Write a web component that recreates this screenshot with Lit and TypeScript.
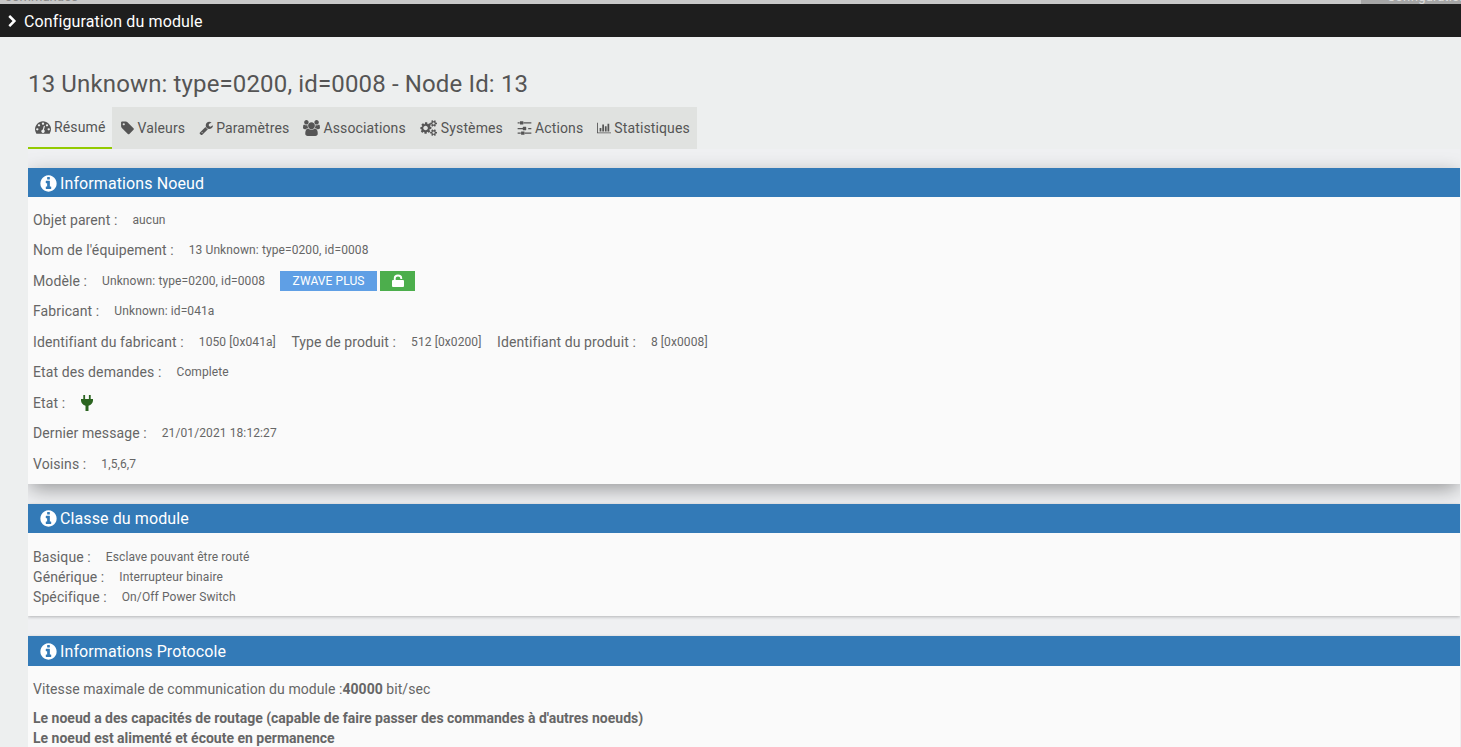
import { LitElement, css, html, svg } from "lit";
import { customElement } from "lit/decorators.js";

// font-awesome style glyphs, drawn on a 1792 grid
const icon = (d: unknown, w = 1792, px?: number) =>
  html`<svg class="ic" viewBox="0 0 ${w} 1792" fill="currentColor" style=${px ? `width:${px}px;height:16px` : ""}>${d}</svg>`;

const gauge = svg`<path d="M384 1152q0-53-37.5-90.5T256 1024t-90.5 37.5T128 1152t37.5 90.5T256 1280t90.5-37.5T384 1152zm192-448q0-53-37.5-90.5T448 576t-90.5 37.5T320 704t37.5 90.5T448 832t90.5-37.5T576 704zm428 506l101-382q6-26-7.5-48.5T1059 750t-48 6.500-30 39l-101 382q-60 5-107 43.500t-63 98.500q-20 77 20 146t117 89 146-20 89-117q16-60-6-117t-72-91zm660-58q0-53-37.500-90.500T1536 1024t-90.500 37.500-37.500 90.500 37.500 90.500 90.500 37.500 90.500-37.500 37.500-90.500zM1024 512q0-53-37.500-90.500T896 384t-90.500 37.500T768 512t37.500 90.500T896 640t90.500-37.500T1024 512zm448 192q0-53-37.500-90.500T1344 576t-90.500 37.500T1216 704t37.500 90.500T1344 832t90.500-37.500T1472 704zm320 448q0 261-141 483-19 29-54 29H195q-35 0-54-29Q0 1414 0 1152q0-182 71-348t191-286 286-191 348-71 348 71 286 191 191 286 71 348z"/>`;
const tag = svg`<path d="M576 448q0-53-37.500-90.500T448 320t-90.500 37.500T320 448t37.500 90.500T448 576t90.500-37.500T576 448zm1067 576q0 53-37 90l-491 492q-39 37-91 37-53 0-90-37L218 890q-38-37-64.500-101T127 672V256q0-52 38-90t90-38h416q53 0 117 26.500T889 219l715 714q39 39 39 91z"/>`;
const wrench = svg`<path d="M448 1472q0-26-19-45t-45-19-45 19-19 45 19 45 45 19 45-19 19-45zm644-420l-682 682q-37 37-90 37-52 0-91-37l-106-108q-38-36-38-90 0-53 38-91l680-680q39 98 114.500 173.500T1091 1052zm634-435q0 39-23 106-47 134-164.500 217.500T1280 1024q-185 0-316.500-131.500T832 576t131.500-316.500T1280 128q58 0 121.500 16.500T1509 191q16 11 16 28t-16 28l-293 169v224l193 107q5-3 79-48.500t135.500-81T1694 582q15 0 23.500 10t8.500 25z"/>`;
const users = svg`<path d="M593 896q-162 5-265 128H194q-82 0-138-40.500T0 865q0-353 124-353 6 0 43.500 21t97.500 42.500T384 597q67 0 133-23-5 37-5 66 0 139 81 256zm1071 637q0 120-73 189.500t-194 69.500H523q-121 0-194-69.500T256 1533q0-53 3.500-103.500t14-109T300 1212t43-97.500 62-81 85.500-53.500T602 960q10 0 43 21.500t73 48 107 48 135 21.500 135-21.500 107-48 73-48 43-21.500q61 0 111.500 20t85.500 53.500 62 81 43 97.500 26.500 108.500 14 109 3.500 103.500zM640 256q0 106-75 181t-181 75-181-75-75-181 75-181 181-75 181 75 75 181zm704 384q0 159-112.500 271.500T960 1024 688.500 911.500 576 640t112.500-271.500T960 256t271.500 112.500T1344 640zm576 225q0 78-56 118.500t-138 40.500h-134q-103-123-265-128 81-117 81-256 0-29-5-66 66 23 133 23 59 0 119-21.500t97.500-42.500 43.500-21q124 0 124 353zm-128-609q0 106-75 181t-181 75-181-75-75-181 75-181 181-75 181 75 75 181z"/>`;
const cogs = svg`<path d="M832 896q0-106-75-181t-181-75-181 75-75 181 75 181 181 75 181-75 75-181zm768 512q0-52-38-90t-90-38-90 38-38 90q0 53 37.500 90.500T1472 1536t90.500-37.500T1600 1408zm0-1024q0-52-38-90t-90-38-90 38-38 90q0 53 37.500 90.500T1472 512t90.500-37.500T1600 384zm-384 421v185q0 10-7 19.500t-16 10.500l-155 24q-11 35-32 76 34 48 90 115 7 11 7 20 0 12-7 19-23 30-82.500 89.500T935 1423q-11 0-21-7l-115-90q-37 19-77 31-11 108-23 155-7 24-30 24H483q-11 0-20-7.500T453 1510l-23-153q-34-10-75-31l-118 89q-7 7-20 7-11 0-21-8-144-133-144-160 0-9 7-19 10-14 41-53t47-61q-23-44-35-82l-152-24q-10-1-17-9.500T0 987V802q0-10 7-19.500T23 772l155-24q11-35 32-76-34-48-90-115-7-11-7-20 0-12 7-20 22-30 82-89t79-59q11 0 21 7l115 90q34-18 77-32 11-108 23-154 7-24 30-24h186q11 0 20 7.500t10 17.500l23 153q34 10 75 31l118-89q8-7 20-7 11 0 21 8 144 133 144 160 0 8-7 19-12 16-42 54t-45 60q23 48 34 82l152 23q10 2 17 10.500t7 19.500zm640 533v140q0 16-149 31-12 27-30 52 51 113 51 138 0 4-4 7-122 71-124 71-8 0-46-47t-52-68q-20 2-30 2t-30-2q-14 21-52 68t-46 47q-2 0-124-71-4-3-4-7 0-25 51-138-18-25-30-52-149-15-149-31v-140q0-16 149-31 13-29 30-52-51-113-51-138 0-4 4-7 4-2 35-20t59-34 30-16q8 0 46 46.500t52 67.500q20-2 30-2t30 2q51-71 92-112l6-2q4 0 124 70 4 3 4 7 0 25-51 138 17 23 30 52 149 15 149 31zm0-1024v140q0 16-149 31-12 27-30 52 51 113 51 138 0 4-4 7-122 71-124 71-8 0-46-47t-52-68q-20 2-30 2t-30-2q-14 21-52 68t-46 47q-2 0-124-71-4-3-4-7 0-25 51-138-18-25-30-52-149-15-149-31V314q0-16 149-31 13-29 30-52-51-113-51-138 0-4 4-7 4-2 35-20t59-34 30-16q8 0 46 46.500t52 67.500q20-2 30-2t30 2q51-71 92-112l6-2q4 0 124 70 4 3 4 7 0 25-51 138 17 23 30 52 149 15 149 31z"/>`;
const sliders = svg`<path d="M352 1408v128H0v-128h352zm352-128q26 0 45 19t19 45v256q0 26-19 45t-45 19H448q-26 0-45-19t-19-45v-256q0-26 19-45t45-19h256zm160-384v128H0V896h864zM224 256v128H0V256h224zm1312 1152v128H800v-128h736zM576 128q26 0 45 19t19 45v256q0 26-19 45t-45 19H320q-26 0-45-19t-19-45V192q0-26 19-45t45-19h256zm320 640q26 0 45 19t19 45v256q0 26-19 45t-45 19H640q-26 0-45-19t-19-45V832q0-26 19-45t45-19h256zm640 128v128h-352V896h352zm0-640v128H672V256h864z"/>`;
const chart = svg`<path d="M640 896v512H384V896h256zm384-512v1024H768V384h256zm1024 1152v128H0V128h128v1408h1920zm-640-896v768h-256V640h256zm384-384v1152h-256V256h256z"/>`;
const info = svg`<path d="M1152 1376v-160q0-14-9-23t-23-9h-96V672q0-14-9-23t-23-9H672q-14 0-23 9t-9 23v160q0 14 9 23t23 9h96v320h-96q-14 0-23 9t-9 23v160q0 14 9 23t23 9h448q14 0 23-9t9-23zm-128-896V320q0-14-9-23t-23-9H800q-14 0-23 9t-9 23v160q0 14 9 23t23 9h192q14 0 23-9t9-23zm640 416q0 209-103 385.500T1281.500 1561 896 1664t-385.500-103T231 1281.500 128 896t103-385.500T510.500 231 896 128t385.500 103T1561 510.500 1664 896z"/>`;
const chevron = svg`<path d="M1363 877l-742 742q-19 19-45 19t-45-19l-166-166q-19-19-19-45t19-45l531-531-531-531q-19-19-19-45t19-45l166-166q19-19 45-19t45 19l742 742q19 19 19 45t-19 45z"/>`;

const tabs = [
  { label: "Résumé", d: gauge, w: 1792, px: 16, active: true },
  { label: "Valeurs", d: tag, w: 1664, px: 14 },
  { label: "Paramètres", d: wrench, w: 1728, px: 14 },
  { label: "Associations", d: users, w: 1920, px: 17 },
  { label: "Systèmes", d: cogs, w: 1920, px: 18 },
  { label: "Actions", d: sliders, w: 1536, px: 15 },
  { label: "Statistiques", d: chart, w: 2048, px: 14 },
];

@customElement("app-root")
export class AppRoot extends LitElement {
  static styles = css`
    :host {
      display: block;
      height: 747px;
      overflow: hidden;
      background: #edefef;
      font-family: Roboto, sans-serif;
      font-size: 14px;
      letter-spacing: .1px;
      color: #666;
    }
    .strip {
      height: 4px;
      background: #c8c8c8;
      overflow: hidden;
      display: flex;
      justify-content: space-between;
      font-size: 13px;
      line-height: 14px;
    }
    .strip span { margin-top: -10px; height: 14px; }
    .strip .left { margin-left: 5px; color: #8a8a8a; }
    .strip .right { width: 100px; padding-left: 26px; box-sizing: border-box; background: #a6a6a6; color: #dedede; height: 24px; }
    .bar {
      height: 33px;
      background: #1e1e1e;
      color: #fff;
      font-size: 16px;
      letter-spacing: .13px;
      display: flex;
      align-items: center;
      gap: 5px;
      padding: 1px 0 0 6px;
      box-sizing: border-box;
    }
    .bar .ic { width: 13px; height: 13px; }
    .page { padding: 0 1px 0 28px; }
    h1 {
      margin: 0;
      padding-top: 33px;
      height: 37px;
      font-size: 24px;
      line-height: 28px;
      font-weight: 400;
      letter-spacing: .14px;
      color: #555;
    }
    .tabs {
      display: inline-flex;
      background: #e0e2e0;
      height: 42px;
      vertical-align: top;
    }
    .tab {
      display: flex;
      align-items: center;
      gap: 3px;
      padding: 0 7px;
      color: #555;
      letter-spacing: .13px;
    }
    .tab.active {
      background: #edefef;
      border-bottom: 2px solid #93ca02;
      margin-right: 1px;
      box-sizing: border-box;
    }
    .ic { flex: none; }
    .tab-row { height: 42px; }
    .content {
      background: #eff0f2;
      overflow: hidden;
      padding-top: 19px;
    }
    .panel { background: #fafafa; margin-bottom: 20px; }
    .panel.big { box-shadow: 0 6px 20px -2px rgba(0,0,0,.4); }
    .panel.small { box-shadow: 0 1px 3px rgba(0,0,0,.25); }
    .head {
      height: 29px;
      background: #337ab7;
      color: #fff;
      font-size: 16px;
      display: flex;
      align-items: center;
      gap: 2px;
      padding: 1px 0 0 11px;
      box-sizing: border-box;
    }
    .head .ic { width: 19px; height: 19px; }
    .head.tall { height: 30px; padding-top: 2px; }
    .body { padding: 7.7px 5px 4.8px; }
    .row { height: 30.5px; display: flex; align-items: center; white-space: nowrap; }
    .val { font-size: 12px; margin-left: 15px; }
    .lbl2 { margin-left: 15.5px; }
    .badge {
      height: 20px;
      display: flex;
      align-items: center;
      justify-content: center;
      color: #fff;
      font-size: 12px;
      margin-left: 15px;
    }
    .zw { width: 97px; background: #5f9fe5; }
    .lock { width: 35px; background: #4cae4c; margin-left: 3px; }
    .lock svg { width: 12px; height: 13px; margin-top: -1px; }
    .plug { color: #2b6420; margin-left: 16px; display: flex; }
    .plug svg { width: 12px; height: 16px; }
    .cls { padding: 14px 5px 9px; }
    .cls .row { height: 20px; }
    .proto { padding: 13px 5px 0; letter-spacing: .07px; }
    .proto p { margin: 0; line-height: 20px; }
    .proto .speed { margin-bottom: 9px; }
    b { font-weight: 700; letter-spacing: 0; }
  `;

  row(label: string, value: string) {
    return html`<div class="row"><span>${label}</span><span class="val">${value}</span></div>`;
  }

  panelHead(title: string, tall = false) {
    return html`<div class="head ${tall ? "tall" : ""}">${icon(info)}<span>${title}</span></div>`;
  }

  render() {
    return html`
      <div class="strip"><span class="left">commandes</span><span class="right">Configuration</span></div>
      <div class="bar">${icon(chevron)}<span>Configuration du module</span></div>
      <div class="page">
        <h1>13 Unknown: type=0200, id=0008 - Node Id: 13</h1>
        <div class="tab-row">
          <div class="tabs">
            ${tabs.map(
              (t) => html`<div class="tab ${t.active ? "active" : ""}">${icon(t.d, t.w, t.px)}<span>${t.label}</span></div>`
            )}
          </div>
        </div>
        <div class="content">
          <div class="panel big">
            ${this.panelHead("Informations Noeud")}
            <div class="body">
              ${this.row("Objet parent :", "aucun")}
              ${this.row("Nom de l'équipement :", "13 Unknown: type=0200, id=0008")}
              <div class="row">
                <span>Modèle :</span>
                <span class="val">Unknown: type=0200, id=0008</span>
                <span class="badge zw">ZWAVE PLUS</span>
                <span class="badge lock">
                  <svg viewBox="0 0 12 13" fill="currentColor">
                    <path d="M1.800 6.500V4.200a4.200 3.700 0 0 1 8.400 0v.8H8.300V4.300a2.300 1.900 0 0 0-4.600 0v2.200z"/>
                    <rect y="6" width="12" height="7" rx="1"/>
                  </svg>
                </span>
              </div>
              ${this.row("Fabricant :", "Unknown: id=041a")}
              <div class="row">
                <span>Identifiant du fabricant :</span><span class="val">1050 [0x041a]</span>
                <span class="lbl2">Type de produit :</span><span class="val">512 [0x0200]</span>
                <span class="lbl2">Identifiant du produit :</span><span class="val">8 [0x0008]</span>
              </div>
              ${this.row("Etat des demandes :", "Complete")}
              <div class="row">
                <span>Etat :</span>
                <span class="plug">
                  <svg viewBox="0 0 12 16" fill="currentColor">
                    <path d="M2.300 0h1.800v4H2.300zM7.900 0h1.800v4H7.900zM0 4h12v1.500c0 2.500-2 4.500-4.500 5.200V16h-3v-5.300C2 10 0 8 0 5.500z"/>
                  </svg>
                </span>
              </div>
              ${this.row("Dernier message :", "21/01/2021 18:12:27")}
              ${this.row("Voisins :", "1,5,6,7")}
            </div>
          </div>
          <div class="panel small">
            ${this.panelHead("Classe du module")}
            <div class="cls">
              ${this.row("Basique :", "Esclave pouvant être routé")}
              ${this.row("Générique :", "Interrupteur binaire")}
              ${this.row("Spécifique :", "On/Off Power Switch")}
            </div>
          </div>
          <div class="panel small">
            ${this.panelHead("Informations Protocole", true)}
            <div class="proto">
              <p class="speed">Vitesse maximale de communication du module :<b>40000</b> bit/sec</p>
              <p><b>Le noeud a des capacités de routage (capable de faire passer des commandes à d'autres noeuds)</b></p>
              <p><b>Le noeud est alimenté et écoute en permanence</b></p>
            </div>
          </div>
        </div>
      </div>
    `;
  }
}
